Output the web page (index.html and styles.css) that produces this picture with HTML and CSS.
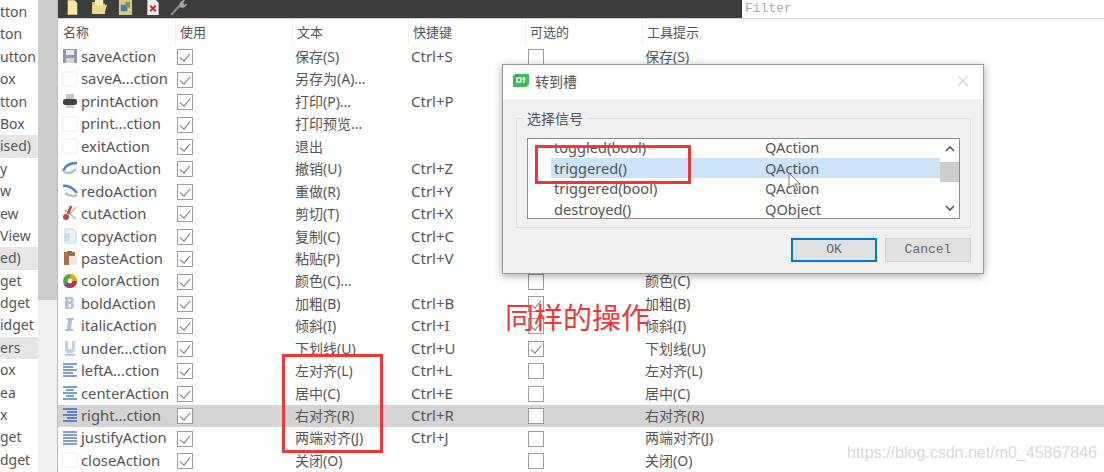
FILE: index.html
```html
<!DOCTYPE html>
<html lang="zh-CN">
<head>
    <meta charset="UTF-8">
    <meta name="viewport" content="width=device-width, initial-scale=1.0">
    <title>Action Editor</title>
    <link rel="stylesheet" href="styles.css">
</head>
<body>
    <svg class="defs" width="0" height="0">
        <symbol id="i-save" viewBox="0 0 16 16"><rect x="1" y="1" width="14" height="14" fill="#8f98a6"/><rect x="4" y="2" width="8" height="5" fill="#e8ecf0"/><rect x="4" y="10" width="8" height="5" fill="#d5d8dc"/></symbol>
        <symbol id="i-blank" viewBox="0 0 16 16"><rect x="1" y="1" width="14" height="14" fill="#fff" stroke="#eee"/></symbol>
        <symbol id="i-print" viewBox="0 0 16 16"><rect x="4" y="1" width="8" height="5" fill="#c4c4c4"/><rect x="1" y="6" width="14" height="6" rx="2" fill="#444"/><rect x="4" y="12" width="8" height="3" fill="#ccc"/></symbol>
        <symbol id="i-undo" viewBox="0 0 16 16"><path d="M1 11C3 6 8 3 15 3" fill="none" stroke="#4a7fd0" stroke-width="2.500"/><path d="M2 12c4 2 9 1 12-3" fill="none" stroke="#a9bfe2" stroke-width="2.500"/></symbol>
        <symbol id="i-redo" viewBox="0 0 16 16"><path d="M1 3c5-1 10 2 14 7" fill="none" stroke="#4a7fd0" stroke-width="2.500"/><path d="M3 10c4 3 8 4 12 2" fill="none" stroke="#bbb" stroke-width="2.500"/></symbol>
        <symbol id="i-cut" viewBox="0 0 16 16"><path d="M3 5l11 9M14 2L8 9" fill="none" stroke="#b9b9b9" stroke-width="1.500"/><circle cx="4" cy="12" r="3" fill="#c0453c"/><path d="M9 1L6 9" stroke="#c0453c" stroke-width="2.500"/></symbol>
        <symbol id="i-copy" viewBox="0 0 16 16"><path d="M3 1h8l3 3v11H3z" fill="#eef2f7" stroke="#c8d2de"/><rect x="2" y="5" width="6" height="8" fill="#c9dcee"/></symbol>
        <symbol id="i-paste" viewBox="0 0 16 16"><rect x="2" y="2" width="11" height="13" fill="#a86f48"/><rect x="7" y="6" width="8" height="9" fill="#e8e8e8"/><rect x="5" y="1" width="5" height="3" fill="#777"/></symbol>
        <symbol id="i-color" viewBox="0 0 16 16"><circle cx="8" cy="8" r="7" fill="#5aa83c"/><path d="M8 8V1a7 7 0 0 1 7 7z" fill="#e9a320"/><path d="M8 8h7a7 7 0 0 1-7 7z" fill="#c9323a"/><path d="M8 8v7a7 7 0 0 1-6-3z" fill="#7a3fa8"/><circle cx="8" cy="8" r="2.400" fill="#f3f3f3"/></symbol>
        <symbol id="i-bold" viewBox="0 0 16 16"><path d="M3 2h6a3 3 0 0 1 1.500 5.500A3.500 3.500 0 0 1 9 14H3zM6.500 4v2.500H8.500V4zM6.500 9v3H9V9z" fill="#a9c3e6" fill-rule="evenodd"/></symbol>
        <symbol id="i-italic" viewBox="0 0 16 16"><path d="M5 1h7v2H10L9 12h2v2H3v-2h2L6 3H5z" fill="#a9bfdc"/></symbol>
        <symbol id="i-under" viewBox="0 0 16 16"><path d="M3 1h3v8h4V1h3v9l-2 3H5l-2-3z" fill="#bfd0e6"/><rect x="3" y="14" width="10" height="1.500" fill="#9db7d8"/></symbol>
        <symbol id="i-left" viewBox="0 0 16 16"><path d="M1 2h14M1 5h10M1 8h14M1 11h10M1 14h14" stroke="#7f9fcb" stroke-width="2"/></symbol>
        <symbol id="i-center" viewBox="0 0 16 16"><path d="M1 2h14M4 5h8M1 8h14M4 11h8M1 14h14" stroke="#7f9fcb" stroke-width="2"/></symbol>
        <symbol id="i-right" viewBox="0 0 16 16"><path d="M1 2h14M5 5h10M1 8h14M5 11h10M1 14h14" stroke="#5b86c4" stroke-width="2"/></symbol>
        <symbol id="i-justify" viewBox="0 0 16 16"><path d="M1 2h14M1 5h14M1 8h14M1 11h14M1 14h14" stroke="#7f9fcb" stroke-width="2"/></symbol>
    </svg>

    <div class="page">
        <!-- widget box, scrolled sideways so only the word ends show -->
        <div class="side">
            <div class="side-item">tton</div>
            <div class="side-item">ton</div>
            <div class="side-item">utton</div>
            <div class="side-item">ox</div>
            <div class="side-item">tton</div>
            <div class="side-item">Box</div>
            <div class="side-item group">ised)</div>
            <div class="side-item">y</div>
            <div class="side-item">w</div>
            <div class="side-item">ew</div>
            <div class="side-item">View</div>
            <div class="side-item group">ed)</div>
            <div class="side-item">get</div>
            <div class="side-item">dget</div>
            <div class="side-item">idget</div>
            <div class="side-item group">ers</div>
            <div class="side-item">ox</div>
            <div class="side-item">ea</div>
            <div class="side-item">x</div>
            <div class="side-item">get</div>
            <div class="side-item">dget</div>
        </div>
        <div class="side-scroll"><div class="side-thumb"></div></div>

        <div class="main">
            <div class="toolbar">
                <div class="tools">
                    <svg class="tool tool-new" viewBox="0 0 12 16"><path d="M1 0h7l3 3v13H1z" fill="#f4e7a8" stroke="#d8c680" stroke-width=".6"/></svg>
                    <svg class="tool tool-open" viewBox="0 0 18 16"><path d="M1 2h6l2 2h6v11H1z" fill="#d9c47c"/><path d="M4 0h9v9H4z" fill="#f2e7b6"/><path d="M1 6h12l4-1-3 10H1z" fill="#ecd98e"/></svg>
                    <svg class="tool tool-save" viewBox="0 0 16 16"><path d="M1 0h14v16H1z" fill="#d9c78a"/><rect x="3" y="5" width="7" height="7" fill="#3f78b8"/><rect x="8" y="2" width="5" height="6" fill="#7d9a52"/></svg>
                    <svg class="tool tool-del" viewBox="0 0 14 16"><path d="M1 0h9l3 3v13H1z" fill="#f2f2f2"/><path d="M4 6l6 6M10 6l-6 6" stroke="#d22" stroke-width="2"/></svg>
                    <svg class="tool tool-wrench" viewBox="0 0 20 16"><path d="M1 16L11 5" stroke="#8a8a8a" stroke-width="2.500"/><path d="M10 6c0-4 3-6 6-6l-2 3 1 2 3-1c0 3-4 5-7 4z" fill="#a5a5a5"/></svg>
                </div>
                <div class="filter">Filter</div>
            </div>

            <div class="row head">
                <div class="cell">名称</div>
                <div class="cell">使用</div>
                <div class="cell">文本</div>
                <div class="cell">快捷键</div>
                <div class="cell">可选的</div>
                <div class="cell">工具提示</div>
            </div>

            <div class="row"><div class="cell name"><svg class="icon"><use href="#i-save"/></svg>saveAction</div><div class="cell used"><span class="check on"></span></div><div class="cell">保存(S)</div><div class="cell key">Ctrl+S</div><div class="cell"><span class="check"></span></div><div class="cell">保存(S)</div></div>
            <div class="row"><div class="cell name"><svg class="icon"><use href="#i-blank"/></svg>saveA...ction</div><div class="cell used"><span class="check on"></span></div><div class="cell">另存为(A)...</div><div class="cell key"></div><div class="cell"></div><div class="cell"></div></div>
            <div class="row"><div class="cell name"><svg class="icon"><use href="#i-print"/></svg>printAction</div><div class="cell used"><span class="check on"></span></div><div class="cell">打印(P)...</div><div class="cell key">Ctrl+P</div><div class="cell"></div><div class="cell"></div></div>
            <div class="row"><div class="cell name"><svg class="icon"><use href="#i-blank"/></svg>print...ction</div><div class="cell used"><span class="check on"></span></div><div class="cell">打印预览...</div><div class="cell key"></div><div class="cell"></div><div class="cell"></div></div>
            <div class="row"><div class="cell name"><svg class="icon"><use href="#i-blank"/></svg>exitAction</div><div class="cell used"><span class="check on"></span></div><div class="cell">退出</div><div class="cell key"></div><div class="cell"></div><div class="cell"></div></div>
            <div class="row"><div class="cell name"><svg class="icon"><use href="#i-undo"/></svg>undoAction</div><div class="cell used"><span class="check on"></span></div><div class="cell">撤销(U)</div><div class="cell key">Ctrl+Z</div><div class="cell"></div><div class="cell"></div></div>
            <div class="row"><div class="cell name"><svg class="icon"><use href="#i-redo"/></svg>redoAction</div><div class="cell used"><span class="check on"></span></div><div class="cell">重做(R)</div><div class="cell key">Ctrl+Y</div><div class="cell"></div><div class="cell"></div></div>
            <div class="row"><div class="cell name"><svg class="icon"><use href="#i-cut"/></svg>cutAction</div><div class="cell used"><span class="check on"></span></div><div class="cell">剪切(T)</div><div class="cell key">Ctrl+X</div><div class="cell"></div><div class="cell"></div></div>
            <div class="row"><div class="cell name"><svg class="icon"><use href="#i-copy"/></svg>copyAction</div><div class="cell used"><span class="check on"></span></div><div class="cell">复制(C)</div><div class="cell key">Ctrl+C</div><div class="cell"></div><div class="cell"></div></div>
            <div class="row"><div class="cell name"><svg class="icon"><use href="#i-paste"/></svg>pasteAction</div><div class="cell used"><span class="check on"></span></div><div class="cell">粘贴(P)</div><div class="cell key">Ctrl+V</div><div class="cell"></div><div class="cell"></div></div>
            <div class="row"><div class="cell name"><svg class="icon"><use href="#i-color"/></svg>colorAction</div><div class="cell used"><span class="check on"></span></div><div class="cell">颜色(C)...</div><div class="cell key"></div><div class="cell"><span class="check"></span></div><div class="cell">颜色(C)</div></div>
            <div class="row"><div class="cell name"><svg class="icon"><use href="#i-bold"/></svg>boldAction</div><div class="cell used"><span class="check on"></span></div><div class="cell">加粗(B)</div><div class="cell key">Ctrl+B</div><div class="cell"><span class="check on"></span></div><div class="cell">加粗(B)</div></div>
            <div class="row"><div class="cell name"><svg class="icon"><use href="#i-italic"/></svg>italicAction</div><div class="cell used"><span class="check on"></span></div><div class="cell">倾斜(I)</div><div class="cell key">Ctrl+I</div><div class="cell"><span class="check on"></span></div><div class="cell">倾斜(I)</div></div>
            <div class="row"><div class="cell name"><svg class="icon"><use href="#i-under"/></svg>under...ction</div><div class="cell used"><span class="check on"></span></div><div class="cell">下划线(U)</div><div class="cell key">Ctrl+U</div><div class="cell"><span class="check on"></span></div><div class="cell">下划线(U)</div></div>
            <div class="row"><div class="cell name"><svg class="icon"><use href="#i-left"/></svg>leftA...ction</div><div class="cell used"><span class="check on"></span></div><div class="cell">左对齐(L)</div><div class="cell key">Ctrl+L</div><div class="cell"><span class="check"></span></div><div class="cell">左对齐(L)</div></div>
            <div class="row"><div class="cell name"><svg class="icon"><use href="#i-center"/></svg>centerAction</div><div class="cell used"><span class="check on"></span></div><div class="cell">居中(C)</div><div class="cell key">Ctrl+E</div><div class="cell"><span class="check"></span></div><div class="cell">居中(C)</div></div>
            <div class="row selected"><div class="cell name"><svg class="icon"><use href="#i-right"/></svg>right...ction</div><div class="cell used"><span class="check on"></span></div><div class="cell">右对齐(R)</div><div class="cell key">Ctrl+R</div><div class="cell"><span class="check"></span></div><div class="cell">右对齐(R)</div></div>
            <div class="row"><div class="cell name"><svg class="icon"><use href="#i-justify"/></svg>justifyAction</div><div class="cell used"><span class="check on"></span></div><div class="cell">两端对齐(J)</div><div class="cell key">Ctrl+J</div><div class="cell"><span class="check"></span></div><div class="cell">两端对齐(J)</div></div>
            <div class="row"><div class="cell name"><svg class="icon"><use href="#i-blank"/></svg>closeAction</div><div class="cell used"><span class="check on"></span></div><div class="cell">关闭(O)</div><div class="cell key"></div><div class="cell"><span class="check"></span></div><div class="cell">关闭(O)</div></div>
        </div>
    </div>

    <!-- go to slot dialog -->
    <div class="dialog">
        <div class="dialog-title">
            <svg class="qt-logo" viewBox="0 0 16 14"><path d="M2 0h14v10l-3 3H0V2z" fill="#41b85a"/><rect x="4" y="4" width="4" height="4" fill="none" stroke="#fff" stroke-width="1.300"/><path d="M11 3v6M9.500 5h3" stroke="#fff" stroke-width="1.200"/></svg>
            <span class="dialog-name">转到槽</span>
            <svg class="dialog-close" viewBox="0 0 12 12"><path d="M1 1l10 10M11 1L1 11" stroke="#d4d4d4" stroke-width="1.200"/></svg>
        </div>
        <div class="dialog-body">
            <div class="groupbox">
                <div class="legend">选择信号</div>
                <div class="signals">
                    <div class="signal-rows">
                        <div class="signal"><span class="signal-name">toggled(bool)</span><span>QAction</span></div>
                        <div class="signal current"><span class="signal-name">triggered()</span><span>QAction</span></div>
                        <div class="signal"><span class="signal-name">triggered(bool)</span><span>QAction</span></div>
                        <div class="signal"><span class="signal-name">destroyed()</span><span>QObject</span></div>
                    </div>
                    <div class="signal-scroll">
                        <svg class="arrow" viewBox="0 0 12 8"><path d="M2 6l4-4 4 4" fill="none" stroke="#555" stroke-width="1.600"/></svg>
                        <div class="signal-thumb"></div>
                        <svg class="arrow" viewBox="0 0 12 8"><path d="M2 2l4 4 4-4" fill="none" stroke="#555" stroke-width="1.600"/></svg>
                    </div>
                </div>
            </div>
            <div class="dialog-buttons">
                <div class="btn btn-default">OK</div>
                <div class="btn">Cancel</div>
            </div>
        </div>
    </div>

    <svg class="cursor" viewBox="0 0 14 20"><path d="M1 1v15l4-3 3 6 2-1-3-6h5z" fill="#fff" fill-opacity=".7" stroke="#777"/></svg>

    <!-- red notes drawn on top -->
    <div class="mark mark-signal"></div>
    <div class="mark mark-text"></div>
    <div class="note">同样的操作</div>
    <div class="watermark">https://blog.csdn.net/m0_45867846</div>
</body>
</html>
```

FILE: styles.css
```css
* {
    box-sizing: border-box;
}

html, body {
    margin: 0;
    height: 100%;
    overflow: hidden;
}

body {
    position: relative;
    background-color: #fff;
    color: #555;
    font-family: "Noto Sans", "Noto Sans CJK SC", sans-serif;
    font-size: 14px;
}

.defs {
    position: absolute;
}

.page {
    display: flex;
    height: 472px;
}

/* widget box */
.side {
    width: 38px;
    padding-top: 1px;
    overflow: hidden;
    flex: none;
}

.side-item {
    height: 22.4px;
    line-height: 22.4px;
    white-space: nowrap;
}

.side-item.group {
    background-color: #e6e6e6;
}

.side-scroll {
    width: 20px;
    flex: none;
    background-color: #f0f0f0;
    border-right: 1px solid #bdbdbd;
}

.side-thumb {
    height: 300px;
    background-color: #cdcdcd;
}

/* action table */
.main {
    flex: 1;
    min-width: 0;
}

.toolbar {
    display: flex;
    height: 19px;
    background-color: #3c3c3c;
    border-bottom: 1px solid #cfcfcf;
}

.tools {
    display: flex;
    align-items: flex-start;
    width: 684px;
    padding-left: 9px;
}

.tool {
    height: 15px;
    flex: none;
}

.tool-new { width: 11px; }
.tool-open { width: 17px; margin-left: 13px; }
.tool-save { width: 15px; margin-left: 10px; }
.tool-del { width: 14px; margin-left: 13px; }
.tool-wrench { width: 19px; margin-left: 10px; }

.filter {
    flex: 1;
    padding-left: 3px;
    background-color: #fff;
    color: #aaa;
    font-family: "Liberation Mono", monospace;
    font-size: 13px;
    line-height: 17px;
}

.row {
    display: grid;
    grid-template-columns: 117px 117px 116px 117px 117px 1fr;
    height: 22.45px;
    line-height: 22.45px;
}

.row.head {
    height: 27px;
    line-height: 27px;
    font-size: 13px;
}

.row.selected {
    background-color: #d4d4d4;
}

.cell {
    display: flex;
    align-items: center;
    padding-left: 3px;
    white-space: nowrap;
    overflow: hidden;
}

.head .cell {
    padding-left: 4px;
    border-left: 1px solid #f0f0f0;
}

.head .cell:first-child {
    padding-left: 5px;
    border-left: 0;
}

.cell.name {
    padding-left: 4px;
    padding-bottom: 2px;
    font-size: 14.8px;
}

.cell.used {
    padding-left: 2px;
}

.cell.key {
    padding-bottom: 2px;
    font-size: 15px;
}

.icon {
    width: 16px;
    height: 16px;
    margin-right: 3px;
    flex: none;
}

.check {
    position: relative;
    display: block;
    width: 16px;
    height: 16px;
    background-color: #fff;
    border: 1.500px solid #9c9c9c;
}

.check.on::after {
    content: "";
    position: absolute;
    left: 4px;
    top: 1px;
    width: 5px;
    height: 9px;
    border: solid #777;
    border-width: 0 1.500px 1.500px 0;
    transform: rotate(40deg);
}

/* dialog sitting over the table */
.dialog {
    position: absolute;
    left: 502px;
    top: 64px;
    width: 482px;
    height: 210px;
    background-color: #f0f0f0;
    border: 1px solid #9a9a9a;
    box-shadow: 0 2px 8px rgba(0, 0, 0, 0.35);
}

.dialog-title {
    display: flex;
    align-items: center;
    height: 34px;
    padding: 0 14px 2px 10px;
    background-color: #fff;
}

.qt-logo {
    width: 16px;
    height: 14px;
}

.dialog-name {
    margin-left: 6px;
}

.dialog-close {
    width: 12px;
    height: 12px;
    margin-left: auto;
}

.dialog-body {
    padding: 19px 12px 0 13px;
}

.groupbox {
    position: relative;
    height: 110px;
    padding: 19px 10px 0 10px;
    border: 1px solid #e0e0e0;
}

.legend {
    position: absolute;
    left: 6px;
    top: -10px;
    padding: 0 4px;
    background-color: #f0f0f0;
    line-height: 20px;
}

.signals {
    display: flex;
    height: 81px;
    background-color: #fff;
    border: 1px solid #8e8e8e;
    overflow: hidden;
}

.signal-rows {
    flex: 1;
    margin-top: -2px;
    padding-left: 23px;
    font-size: 14.6px;
}

.signal {
    display: flex;
    height: 20.5px;
    line-height: 20.5px;
    padding-left: 3px;
}

.signal.current {
    background-color: #cce4f7;
}

.signal-name {
    width: 211px;
}

.signal-scroll {
    display: flex;
    flex-direction: column;
    align-items: center;
    width: 19px;
    flex: none;
}

.arrow {
    width: 12px;
    height: 8px;
    margin: 6px 0;
}

.signal-thumb {
    width: 100%;
    height: 20px;
    margin-top: 3px;
    margin-bottom: auto;
    background-color: #cdcdcd;
}

.dialog-buttons {
    display: flex;
    justify-content: flex-end;
    gap: 8px;
    margin-top: 10px;
}

.btn {
    width: 86px;
    height: 24px;
    background-color: #e1e1e1;
    border: 1px solid #d2d2d2;
    color: #666;
    font-family: "Liberation Mono", monospace;
    font-size: 13px;
    line-height: 22px;
    text-align: center;
}

.btn-default {
    border: 2px solid #0078d7;
    line-height: 20px;
}

.cursor {
    position: absolute;
    left: 788px;
    top: 172px;
    width: 14px;
    height: 20px;
}

/* annotations */
.mark {
    position: absolute;
    border: 3px solid #f53535;
}

.mark-signal {
    left: 535px;
    top: 145px;
    width: 156px;
    height: 39px;
}

.mark-text {
    left: 282px;
    top: 354px;
    width: 101px;
    height: 99px;
}

.note {
    position: absolute;
    left: 505px;
    top: 295px;
    color: #f53535;
    font-family: "Noto Sans CJK SC", sans-serif;
    font-size: 29px;
    line-height: 42px;
}

.watermark {
    position: absolute;
    left: 847px;
    top: 444px;
    color: #d8d8d8;
    font-family: "Liberation Sans", sans-serif;
    font-size: 16px;
    line-height: 18px;
}
```
